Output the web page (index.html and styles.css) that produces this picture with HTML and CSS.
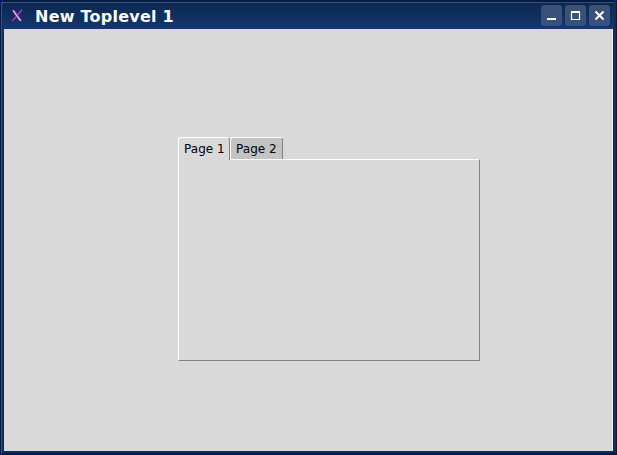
FILE: index.html
```html
<!DOCTYPE html>
<html lang="en">
<head>
<meta charset="utf-8">
<title>New Toplevel 1</title>
<link rel="stylesheet" href="styles.css">
</head>
<body>
<div class="window">
  <header class="titlebar">
    <svg class="logo" width="14" height="14" viewBox="0 0 14 14">
      <path d="M12 .8 7.500 6M6 7.800 2.300 12" stroke="#c02fc8" stroke-width="1.500" fill="none"/>
      <path d="M1.800 1.300H4.800L12 11.800H9Z" fill="#a23cc8"/>
      <path d="M3 1.500 7 7 10.800 11.800" stroke="#ecd0f8" stroke-width="1.100" fill="none"/>
    </svg>
    <h1 class="title">New Toplevel 1</h1>
    <div class="controls">
      <button class="control" aria-label="Minimize"><svg width="21" height="21"><path d="M6 14H15" stroke="#fff" stroke-width="2"/></svg></button>
      <button class="control" aria-label="Maximize"><svg width="21" height="21"><path d="M6.500 7H14.500V14.500H6.500Z" fill="none" stroke="#fff" stroke-width="1.200"/><path d="M6 7H15" stroke="#fff" stroke-width="2"/></svg></button>
      <button class="control" aria-label="Close"><svg width="21" height="21"><path d="M6.500 6.500 14.500 14.500M14.500 6.500 6.500 14.500" stroke="#fff" stroke-width="2"/></svg></button>
    </div>
  </header>
  <main class="content">
    <section class="notebook">
      <div class="tabs">
        <div class="tab active">Page 1</div>
        <div class="tab">Page 2</div>
      </div>
      <div class="page"></div>
    </section>
  </main>
</div>
</body>
</html>
```

FILE: styles.css
```css
* { box-sizing: border-box; }
body { margin: 0; background: #0000b8; font-family: "DejaVu Sans", sans-serif; }
.window {
  display: flex;
  flex-direction: column;
  width: 617px;
  height: 455px;
  padding: 1px 4px 4px;
  border-radius: 4px 4px 0 0;
  background: #102d60;
  box-shadow: inset 0 0 0 1px #061b42, inset 2px 2px 0 #35537f, inset -1px -2px 0 #061b42;
}
.titlebar {
  display: flex;
  align-items: center;
  height: 28px;
  margin: 0 -1px;
  padding: 1px 4px 0 7px;
  border-top: 1px solid #061b42;
  box-shadow: inset 0 1px #35537f;
  background: linear-gradient(#0c2750, #15376c);
}
.logo { flex: none; }
.title {
  flex: 1;
  margin: 1px 0 0 11px;
  color: #fff;
  font-size: 16px;
  line-height: 20px;
  font-weight: bold;
  letter-spacing: .24px;
  white-space: nowrap;
}
.controls { display: flex; gap: 3px; margin-bottom: 2px; }
.control {
  width: 21px;
  height: 21px;
  padding: 0;
  border: 0;
  border-radius: 3px;
  background: linear-gradient(#3d5175, #34517f);
}
.control svg { display: block; }
.content {
  flex: 1;
  padding: 108px 133px 90px 174px;
  background: #d9d9d9;
  border-right: 1px solid #e6f0fa;
}
.notebook { width: 302px; }
.tabs { display: flex; height: 22px; }
.tab {
  width: 53px;
  height: 22px;
  padding-left: 5px;
  border: solid #fff;
  border-width: 1px 1px 0 1px;
  border-right-color: #828282;
  border-radius: 3px 3px 0 0;
  background: #c3c3c3;
  color: #000;
  font-size: 12px;
  line-height: 22px;
  letter-spacing: .05px;
  white-space: nowrap;
}
.tab.active { position: relative; width: 52px; height: 23px; background: #d9d9d9; }
.page {
  width: 302px;
  height: 202px;
  border: 1px solid #fff;
  border-right-color: #828282;
  border-bottom-color: #828282;
}
```
